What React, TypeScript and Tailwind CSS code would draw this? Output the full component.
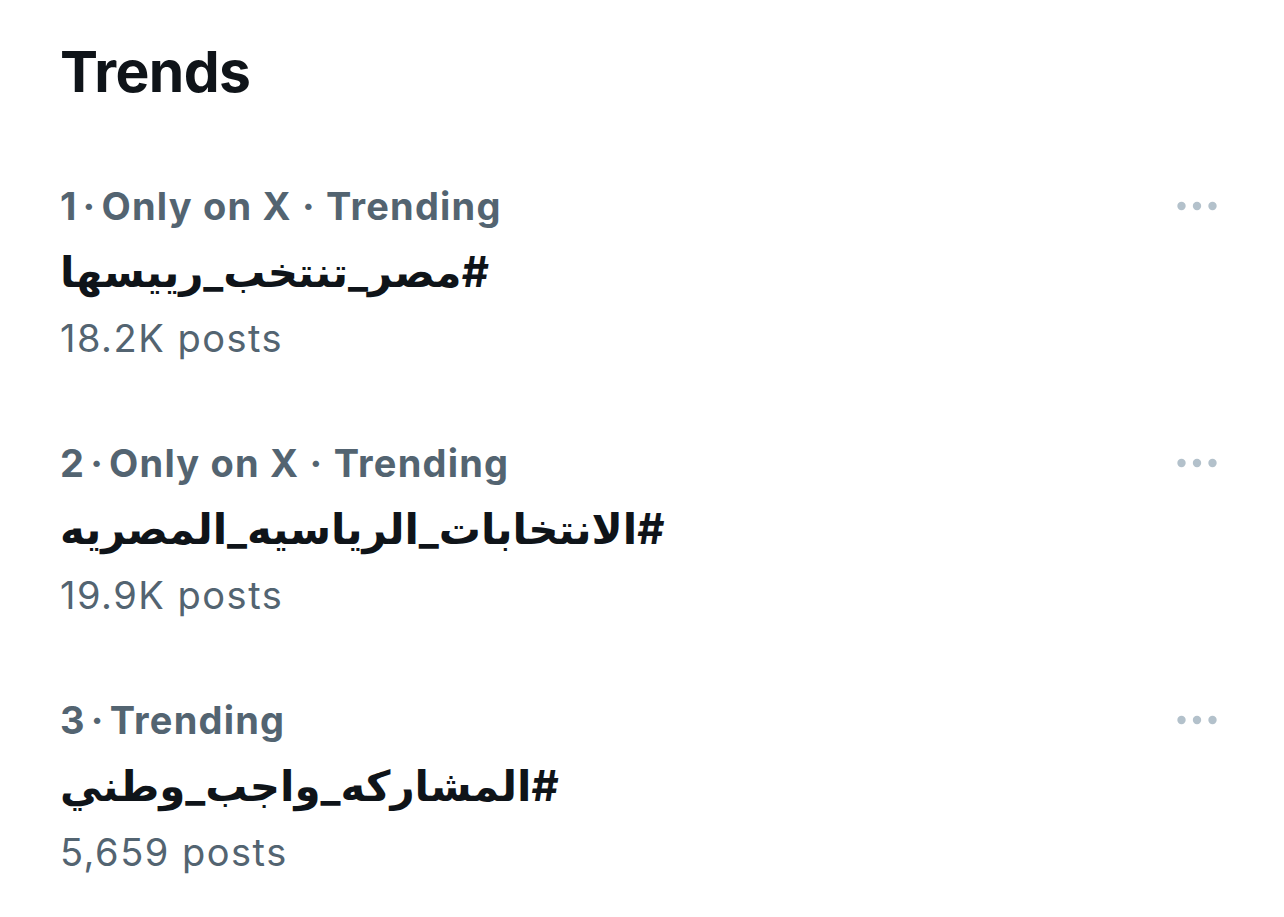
const trends = [
  { rank: 1, meta: "Only on X · Trending", tag: "#مصر_تنتخب_رييسها", posts: "18.2K posts" },
  { rank: 2, meta: "Only on X · Trending", tag: "#الانتخابات_الرياسيه_المصريه", posts: "19.9K posts" },
  { rank: 3, meta: "Trending", tag: "#المشاركه_واجب_وطني", posts: "5,659 posts" },
];

export default function App() {
  return (
    <div className="min-h-[917px] bg-white px-[60px] pt-[38px] font-['Inter','DejaVu_Sans',sans-serif]">
      {/* Header */}
      <h1 className="text-[57px] font-bold leading-[68px] tracking-[-0.6px] text-[#0f1419]">
        Trends
      </h1>

      <div className="mt-[77px] flex flex-col gap-[79px]">
        {trends.map((t) => (
          <TrendRow key={t.rank} {...t} />
        ))}
      </div>
    </div>
  );
}

/* ================= COMPONENT ================= */

function TrendRow({
  rank,
  meta,
  tag,
  posts,
}: {
  rank: number;
  meta: string;
  tag: string;
  posts: string;
}) {
  return (
    <div className="flex items-start justify-between">
      <div className="flex flex-col items-start">
        <div className="text-[38px] font-bold leading-[46px] tracking-[1.2px] text-[#536471]">
          {rank}
          <span className="mx-[5px]">·</span>
          {meta}
        </div>
        <div className="text-[42px] font-bold leading-[86px] text-[#0f1419]">
          <span dir="rtl">{tag}</span>
        </div>
        <div className="text-[38px] leading-[46px] tracking-[1.5px] text-[#536471]">{posts}</div>
      </div>

      <div className="mr-[7px] flex h-[46px] items-center">
        <svg width="40" height="10" viewBox="0 0 40 10">
          <circle cx="4.5" cy="5" r="4.2" fill="#b3c1cb" />
          <circle cx="20" cy="5" r="4.2" fill="#b3c1cb" />
          <circle cx="35.5" cy="5" r="4.2" fill="#b3c1cb" />
        </svg>
      </div>
    </div>
  );
}
